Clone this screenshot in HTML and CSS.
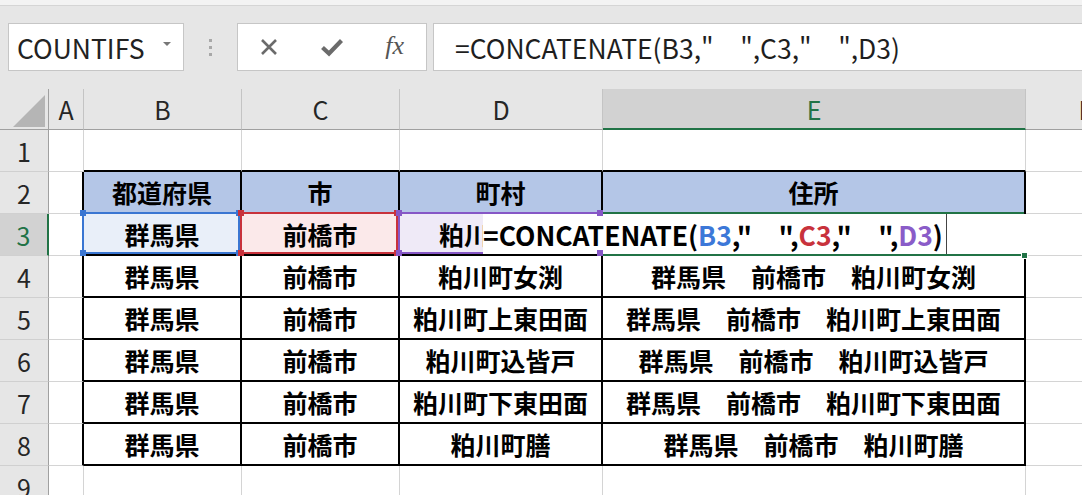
FILE: index.html
```html
<!DOCTYPE html>
<html lang="ja">
<head>
    <meta charset="UTF-8">
    <meta name="viewport" content="width=device-width, initial-scale=1.0">
    <title>CONCATENATE - Excel</title>
    <link rel="stylesheet" href="styles.css">
</head>
<body>
    <div class="titlebar"></div>
    <div class="toolbar">
        <div class="namebox"><span>COUNTIFS</span><span class="caret"></span></div>
        <div class="grip"><i></i><i></i><i></i></div>
        <div class="fxbox">
            <span class="tool">
                <svg width="20" height="20" viewBox="0 0 20 20"><path d="M3 3 L17 17 M17 3 L3 17" stroke="#6b6b6b" stroke-width="2.6" fill="none"/></svg>
            </span>
            <span class="tool">
                <svg width="24" height="20" viewBox="0 0 24 20"><path d="M2.5 10.5 L9 16.5 L21.5 3.5" stroke="#6b6b6b" stroke-width="4.2" fill="none"/></svg>
            </span>
            <span class="tool fx">fx</span>
        </div>
        <div class="formula">=CONCATENATE(B3,"　",C3,"　",D3)</div>
    </div>

    <div class="sheet">
        <!-- column headers -->
        <div class="corner"><span class="tri"></span></div>
        <div class="ch">A</div>
        <div class="ch">B</div>
        <div class="ch">C</div>
        <div class="ch">D</div>
        <div class="ch sel">E</div>
        <div class="ch">F</div>

        <!-- row 1 -->
        <div class="rh">1</div>
        <div class="c"></div>
        <div class="c above"></div>
        <div class="c above"></div>
        <div class="c above"></div>
        <div class="c above"></div>
        <div class="c"></div>

        <!-- row 2 -->
        <div class="rh">2</div>
        <div class="c before"></div>
        <div class="c t hd">都道府県</div>
        <div class="c t hd">市</div>
        <div class="c t hd">町村</div>
        <div class="c t hd">住所</div>
        <div class="c"></div>

        <!-- row 3 (editing) -->
        <div class="rh sel">3</div>
        <div class="c before"></div>
        <div class="c t ref ref-b">群馬県<span class="frame"><i class="tl"></i><i class="tr"></i><i class="bl"></i><i class="br"></i></span></div>
        <div class="c t ref ref-c">前橋市<span class="frame"><i class="tl"></i><i class="tr"></i><i class="bl"></i><i class="br"></i></span></div>
        <div class="c t ref ref-d"><span class="peek">粕川</span><span class="frame"><i class="tl"></i><i class="tr"></i><i class="bl"></i><i class="br"></i></span></div>
        <div class="c t cur">
            <span class="curframe"><i class="handle"></i></span>
            <span class="edit">=CONCATENATE(<b class="rb">B3</b>,"　",<b class="rc">C3</b>,"　",<b class="rd">D3</b>)</span>
        </div>
        <div class="c"></div>

        <!-- row 4 -->
        <div class="rh">4</div>
        <div class="c before"></div>
        <div class="c t">群馬県</div>
        <div class="c t">前橋市</div>
        <div class="c t">粕川町女渕</div>
        <div class="c t">群馬県　前橋市　粕川町女渕</div>
        <div class="c"></div>

        <!-- row 5 -->
        <div class="rh">5</div>
        <div class="c before"></div>
        <div class="c t">群馬県</div>
        <div class="c t">前橋市</div>
        <div class="c t">粕川町上東田面</div>
        <div class="c t">群馬県　前橋市　粕川町上東田面</div>
        <div class="c"></div>

        <!-- row 6 -->
        <div class="rh">6</div>
        <div class="c before"></div>
        <div class="c t">群馬県</div>
        <div class="c t">前橋市</div>
        <div class="c t">粕川町込皆戸</div>
        <div class="c t">群馬県　前橋市　粕川町込皆戸</div>
        <div class="c"></div>

        <!-- row 7 -->
        <div class="rh">7</div>
        <div class="c before"></div>
        <div class="c t">群馬県</div>
        <div class="c t">前橋市</div>
        <div class="c t">粕川町下東田面</div>
        <div class="c t">群馬県　前橋市　粕川町下東田面</div>
        <div class="c"></div>

        <!-- row 8 -->
        <div class="rh">8</div>
        <div class="c before"></div>
        <div class="c t">群馬県</div>
        <div class="c t">前橋市</div>
        <div class="c t">粕川町膳</div>
        <div class="c t">群馬県　前橋市　粕川町膳</div>
        <div class="c"></div>

        <!-- row 9 -->
        <div class="rh">9</div>
        <div class="c"></div>
        <div class="c"></div>
        <div class="c"></div>
        <div class="c"></div>
        <div class="c"></div>
        <div class="c"></div>
    </div>
</body>
</html>
```

FILE: styles.css
```css
* {
    box-sizing: border-box;
}

body {
    margin: 0;
    width: 1082px;
    height: 495px;
    overflow: hidden;
    background-color: #ffffff;
    font-family: "Noto Sans CJK JP", "Noto Sans", sans-serif;
    color: #000;
}

.titlebar {
    height: 6px;
    background-color: #f3f3f3;
    border-bottom: 1px solid #d5d5d5;
}

/* 数式バー */
.toolbar {
    height: 83px;
    background-color: #e6e6e6;
    display: flex;
    align-items: flex-start;
    padding: 17px 0 0 8px;
}

.namebox {
    width: 176px;
    height: 48px;
    background: #fff;
    border: 1px solid #c6c6c6;
    display: flex;
    align-items: center;
    padding-left: 8px;
    font-size: 26.5px;
    color: #222;
}

.caret {
    margin-left: auto;
    margin-right: 12px;
    width: 0;
    height: 0;
    border-left: 4px solid transparent;
    border-right: 4px solid transparent;
    border-top: 4px solid #777;
    margin-bottom: 6px;
}

.grip {
    width: 53px;
    height: 48px;
    display: flex;
    flex-direction: column;
    align-items: center;
    justify-content: center;
    gap: 4px;
}

.grip i {
    width: 3px;
    height: 3px;
    background: #a8a8a8;
}

.fxbox {
    width: 190px;
    height: 48px;
    background: #fff;
    border: 1px solid #c6c6c6;
    display: flex;
    align-items: center;
}

.tool {
    flex: 1;
    display: flex;
    justify-content: center;
    align-items: center;
}

.fx {
    font-family: "Liberation Serif", serif;
    font-style: italic;
    font-size: 26px;
    color: #555;
    padding-bottom: 2px;
}

.formula {
    flex: 1;
    margin-left: 6px;
    height: 48px;
    background: #fff;
    border: 1px solid #c6c6c6;
    border-right: none;
    padding-left: 21px;
    font-size: 26.5px;
    color: #1e1e1e;
    display: flex;
    align-items: center;
    white-space: pre;
}

/* シート */
.sheet {
    display: grid;
    grid-template-columns: 49px 35px 158px 158px 203px 423px 120px;
    grid-template-rows: 41px repeat(9, 42px);
    font-size: 25px;
}

.sheet > div {
    display: flex;
    align-items: center;
    justify-content: center;
    white-space: pre;
}

.corner {
    background: #e6e6e6;
    border-right: 1px solid #a0a0a0;
    border-bottom: 1px solid #a0a0a0;
    align-items: flex-end !important;
    justify-content: flex-end !important;
    padding: 0 3px 2px 0;
}

.tri {
    width: 32px;
    height: 32px;
    background: #b5b5b5;
    clip-path: polygon(100% 0, 100% 100%, 0 100%);
}

.ch {
    background: #e6e6e6;
    border-right: 1px solid #c4c4c4;
    border-bottom: 1px solid #a0a0a0;
    color: #262626;
}

.ch.sel {
    background: #d2d2d2;
    color: #217346;
    border-bottom: 2px solid #217346;
}

.rh {
    background: #e6e6e6;
    border-right: 1px solid #a0a0a0;
    border-bottom: 1px solid #d0d0d0;
    color: #262626;
}

.rh.sel {
    background: #d2d2d2;
    color: #217346;
    border-right: 2px solid #217346;
}

.c {
    border-right: 1px solid #d4d4d4;
    border-bottom: 1px solid #d4d4d4;
}

.c.above {
    border-bottom: 2px solid #000;
}

.c.before {
    border-right: 2px solid #000;
}

.c.t {
    border-right: 2px solid #000;
    border-bottom: 2px solid #000;
    font-weight: 700;
}

.c.hd {
    background: #b4c6e7;
}

/* 参照セルの枠 */
.ref {
    position: relative;
}

.ref-b { background: #e9eff9; --ref: #3a76d2; }
.ref-c { background: #fbe9ea; --ref: #c8323c; }
.ref-d {
    background: #efeaf7;
    --ref: #8657c6;
    justify-content: flex-start !important;
    padding-left: 39px;
}

.frame {
    position: absolute;
    top: -2px;
    left: -2px;
    right: 0;
    bottom: 0;
    border: 2px solid var(--ref);
}

.frame i {
    position: absolute;
    width: 6px;
    height: 6px;
    background: var(--ref);
    z-index: 3;
}

.frame .tl { left: -4px; top: -4px; }
.frame .tr { right: -4px; top: -4px; }
.frame .bl { left: -4px; bottom: -4px; }
.frame .br { right: -4px; bottom: -4px; }

/* 編集中のセル */
.c.cur {
    position: relative;
    border-right-color: #fff;
}

.curframe {
    position: absolute;
    top: -2px;
    left: 0;
    right: 0;
    bottom: -2px;
    border-top: 2px solid #217346;
    border-bottom: 2px solid #217346;
}

.handle {
    position: absolute;
    right: -4px;
    bottom: -5px;
    width: 7px;
    height: 7px;
    background: #217346;
    border: 1px solid #fff;
}

.edit {
    position: absolute;
    top: 0;
    bottom: 0;
    left: -120px;
    width: 464px;
    background: #fff;
    border-right: 1px solid #444;
    z-index: 2;
    display: flex;
    align-items: center;
    font-size: 26.5px;
    font-weight: 700;
    white-space: pre;
}

.edit b { font-weight: 700; }
.rb { color: #3c78d8; }
.rc { color: #c8323c; }
.rd { color: #8a5cc8; }
```
